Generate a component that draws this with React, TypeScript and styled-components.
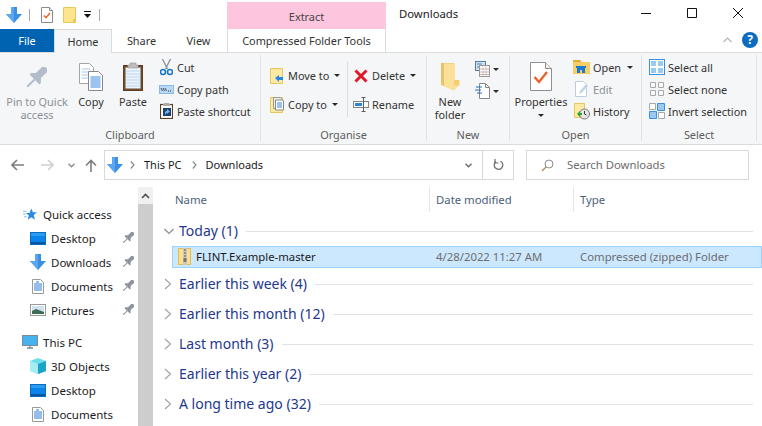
import React from "react";
import styled, { createGlobalStyle } from "styled-components";

const Global = createGlobalStyle`
  html, body { margin: 0; padding: 0; background: #fff; }
  body { font-family: "Noto Sans", "Open Sans", "Liberation Sans", sans-serif; font-size: 11.5px; color: #1a1a1a; }
`;

const Window = styled.div`
  width: 762px; height: 426px; overflow: hidden; background: #fff; display: flex; flex-direction: column;
`;
const TitleBar = styled.div`display: flex; height: 29px; align-items: stretch; flex: none; font-size: 10.9px;`;
const QuickBar = styled.div`display: flex; align-items: center; width: 227px; padding-left: 6px; box-sizing: border-box;`;
const QuickSep = styled.span<{ $left: number; $right: number }>`
  width: 1px; height: 12px; background: #a8a8a8; margin: 0 ${p => p.$right}px 0 ${p => p.$left}px; flex: none;
`;
const QuickGap = styled.span<{ $w: number }>`width: ${p => p.$w}px; flex: none;`;
const ExtractTab = styled.div`
  width: 159px; margin-top: 2px; background: #fec6de; color: #444; display: flex; align-items: center; justify-content: center; flex: none; padding-top: 2px; box-sizing: border-box;
`;
const WinTitle = styled.div`
  margin-left: 13px; flex: 1; font-size: 11.3px; color: #1a1a1a; line-height: 28px;
`;
const WinButtons = styled.div`display: flex; align-items: center; gap: 36px; padding-right: 19px; padding-bottom: 3px;`;

const TabRow = styled.div`display: flex; flex: none; position: relative; border-bottom: 1px solid #dadbdc; box-sizing: content-box; height: 23px; font-size: 10.9px;`;
const FileTab = styled.div`
  width: 54px; background: #0063b1; color: #fff; display: flex; align-items: center; justify-content: center; flex: none;
`;
const Tab = styled.div<{ $w: number; $active?: boolean }>`
  width: ${p => p.$w}px; flex: none; display: flex; align-items: center; justify-content: center; color: #333; box-sizing: border-box;
  ${p => p.$active ? `background:#f5f6f7;border:1px solid #dadbdc;border-bottom:none;height:24px;` : ``}
`;
const ToolsTab = styled.div`
  width: 159px; margin-left: 1px; border-left: 1px solid #dadbdc; border-right: 1px solid #dadbdc; box-sizing: border-box; display: flex; align-items: center; justify-content: center; color: #333; flex: none; height: 23px;
`;
const TabSpacer = styled.div`flex: 1;`;
const HelpArea = styled.div`display: flex; align-items: center; gap: 10px; padding-right: 4px; margin-top: -1px;`;
const HelpBadge = styled.div`
  width: 16px; height: 16px; border-radius: 50%; background: #0c6cc0; color: #fff; font-weight: 700; font-size: 12px; display: flex; align-items: center; justify-content: center; line-height: 1;
`;

const Ribbon = styled.div`
  display: flex; flex: none; background: #f5f6f7; border-bottom: 1px solid #dadbdc; box-sizing: content-box; padding-top: 1px; height: 90px; font-size: 10.9px;
`;
const Group = styled.div<{ $w: number }>`
  width: ${p => p.$w}px; flex: none; box-sizing: border-box; display: flex; flex-direction: column; position: relative;
  &::after { content: ""; position: absolute; right: 0; top: 1px; bottom: 3px; width: 1px; background: #e1e2e3; }
`;
const GroupBody = styled.div<{ $pl?: number }>`
  flex: 1; display: flex; align-items: flex-start; padding-left: ${p => p.$pl ?? 0}px; min-height: 0;
`;
const GroupLabel = styled.div`
  height: 18px; line-height: 18px; text-align: center; color: #5c5c5c; flex: none; padding-right: 1px;
`;
const Big = styled.div<{ $w: number; $muted?: boolean }>`
  width: ${p => p.$w}px; flex: none; display: flex; flex-direction: column; align-items: center; color: ${p => p.$muted ? "#8b9096" : "#333"}; text-align: center; line-height: 13px;
`;
const BigIcon = styled.div`height: 35px; margin-top: 5px; display: flex; align-items: center; justify-content: center; margin-bottom: 1px;`;
const SmallCol = styled.div<{ $ml?: number; $mt?: number; $w?: number }>`
  display: flex; flex-direction: column; margin-left: ${p => p.$ml ?? 0}px; margin-top: ${p => p.$mt ?? 2}px; ${p => p.$w ? `width:${p.$w}px;flex:none;` : ""}
`;
const Small = styled.div<{ $h?: number; $muted?: boolean; $gap?: number }>`
  height: ${p => p.$h ?? 22}px; display: flex; align-items: center; gap: ${p => p.$gap ?? 3}px; color: ${p => p.$muted ? "#8b9096" : "#333"}; white-space: nowrap;
`;
const IconSlot = styled.span<{ $w?: number }>`
  width: ${p => p.$w ?? 16}px; height: 18px; display: flex; align-items: center; justify-content: center; flex: none;
`;
const Caret = styled.span<{ $ml?: number; $mt?: number }>`
  width: 0; height: 0; border-left: 3px solid transparent; border-right: 3px solid transparent; border-top: 3px solid #2a2a2a; margin-left: ${p => p.$ml ?? 2}px; margin-top: ${p => p.$mt ?? 0}px; flex: none;
`;
const VSep = styled.span`width: 1px; height: 55px; background: #dcdddf; margin: 8px 5px 0 0; flex: none;`;
const NewCol = styled.div`display: flex; flex-direction: column; gap: 4px; margin-left: 3px; margin-top: 6px;`;
const NewRow = styled.div`display: flex; align-items: center; gap: 3px; height: 18px;`;

const NavRow = styled.div`display: flex; height: 30px; margin-top: 5px; flex: none; align-items: stretch;`;
const NavButtons = styled.div`display: flex; width: 104px; align-items: center; padding-left: 11px; box-sizing: border-box; flex: none;`;
const NavGap = styled.span<{ $w: number }>`width: ${p => p.$w}px; flex: none;`;
const AddressBox = styled.div`
  width: 410px; flex: none; border: 1px solid #d9d9d9; box-sizing: border-box; display: flex; align-items: center; padding-left: 2px; color: #1a1a1a; font-size: 11px;
`;
const Crumb = styled.span`white-space: nowrap; margin-top: -2px;`;
const CrumbArrow = styled.span<{ $ml: number; $mr: number }>`margin: 0 ${p => p.$mr}px 0 ${p => p.$ml}px; display: flex;`;
const AddrFill = styled.div`flex: 1;`;
const AddrDrop = styled.div`width: 28px; align-self: stretch; display: flex; align-items: center; justify-content: center; flex: none;`;
const AddrEnd = styled.div`width: 30px; align-self: stretch; border-left: 1px solid #d9d9d9; display: flex; align-items: center; justify-content: center; flex: none;`;
const SearchBox = styled.div`
  width: 223px; margin-left: 12px; border: 1px solid #d9d9d9; box-sizing: border-box; display: flex; align-items: center; padding-left: 14px; gap: 13px; color: #6d6d6d; flex: none; font-size: 11.3px;
`;
const SearchText = styled.span`margin-top: -2px;`;

const Main = styled.div`flex: 1; display: flex; min-height: 0; margin-top: 7px;`;
const Sidebar = styled.div`width: 153px; flex: none; display: flex; overflow: hidden;`;
const NavList = styled.div`width: 138px; flex: none; padding-top: 15px; box-sizing: border-box;`;
const NavItem = styled.div<{ $top?: boolean; $gapTop?: number }>`
  height: 24px; display: flex; align-items: center; padding-left: ${p => p.$top ? 22 : 30}px; gap: 5px; position: relative; margin-top: ${p => p.$gapTop ?? 0}px; white-space: nowrap; color: #1a1a1a;
`;
const NavIcon = styled.span`width: 16px; height: 16px; flex: none; display: flex; align-items: center; justify-content: center;`;
const PinSlot = styled.span`position: absolute; left: 123px; top: 6px; display: flex;`;
const Scrollbar = styled.div`width: 15px; flex: none; background: #f0f0f0; display: flex; flex-direction: column;`;
const ScrollBtn = styled.div`height: 17px; display: flex; align-items: center; justify-content: center; flex: none;`;
const ScrollThumb = styled.div`flex: 1; background: #cdcdcd;`;

const Content = styled.div`flex: 1; min-width: 0; display: flex; flex-direction: column; font-size: 11.35px;`;
const ColHeader = styled.div`display: grid; grid-template-columns: 276px 144px 1fr; height: 25px; margin-bottom: 4px; flex: none; color: #4c607a;`;
const ColCell = styled.div<{ $pl: number; $sep?: boolean }>`
  padding-left: ${p => p.$pl}px; display: flex; align-items: center; ${p => p.$sep ? "border-left:1px solid #e5e5e5;" : ""}
`;
const GroupHead = styled.div`
  height: 30px; display: flex; align-items: center; padding-right: 9px; flex: none;
`;
const Chevron = styled.span`width: 26px; flex: none; display: flex; padding-left: 11px; box-sizing: border-box;`;
const GroupTitle = styled.span`font-size: 14px; color: #22388f; white-space: nowrap; line-height: 20px;`;
const GroupLine = styled.span`flex: 1; height: 1px; background: #e2e2e2; margin-left: 8px; margin-top: 1px;`;
const FileRow = styled.div`
  margin-left: 19px; height: 22px; margin-bottom: 1px; padding-bottom: 1px; background: #cce8ff; border: 1px solid #99d1ff; box-sizing: border-box; display: grid; grid-template-columns: 256px 144px 1fr; align-items: center; flex: none;
`;
const FileName = styled.div`display: flex; align-items: center; gap: 5px; padding-left: 5px; color: #1a1a1a; white-space: nowrap;`;
const FileMeta = styled.div`padding-left: 7px; color: #6d6d6d; white-space: nowrap;`;

const Svg = styled.svg`display: block; flex: none;`;

const BlueDown = ({ s = 16 }: { s?: number }) => (
  <Svg width={s} height={s} viewBox="0 0 16 16"><path d="M5 0h6v7h5l-8 9-8-9h5z" fill="#3a8ee6" /><path d="M8 16 0 7h5V0h3z" fill="#5aa7ee" /></Svg>
);
const CheckDoc = () => (
  <Svg width={12} height={16} viewBox="0 0 12 16"><path d="M.5.5h8l3 3v12H.5z" fill="#fff" stroke="#8a8a8a" /><path d="M8.5.5v3h3" fill="#eee" stroke="#8a8a8a" /><path d="M3 8.5l2 2.2L9 6" fill="none" stroke="#e8622a" strokeWidth="1.5" /></Svg>
);
const BigCheckDoc = () => (
  <Svg width={22} height={29} viewBox="0 0 22 29"><path d="M.5.5h15l6 6v22H.5z" fill="#fff" stroke="#8f8f8f" /><path d="M15.5.5v6h6" fill="#eee" stroke="#8f8f8f" /><path d="M4.5 15l4.5 5 8-10" fill="none" stroke="#e9622b" strokeWidth="2.4" /></Svg>
);
const PlainFolder = () => (
  <Svg width={13} height={16} viewBox="0 0 13 16"><path d="M.5.5h12v15H.5z" fill="#fde58f" stroke="#e7c75a" /><path d="M10 12h2.5v3.5H10z" fill="#e7c75a" /></Svg>
);
const DropLine = () => (
  <Svg width={8} height={8} viewBox="0 0 8 8"><path d="M0 0h7v1H0zM0 3h7L3.5 7z" fill="#111" /></Svg>
);
const WinMin = () => <Svg width={10} height={10} viewBox="0 0 10 10"><path d="M0 5.5h10" stroke="#111" /></Svg>;
const WinMax = () => <Svg width={10} height={10} viewBox="0 0 10 10"><path d="M.5.5h9v9h-9z" fill="none" stroke="#111" /></Svg>;
const WinClose = () => <Svg width={10} height={10} viewBox="0 0 10 10"><path d="M0 0l10 10M10 0L0 10" stroke="#111" /></Svg>;
const ChevUp = () => <Svg width={9} height={6} viewBox="0 0 9 6"><path d="M.5 5L4.5 1l4 4" fill="none" stroke="#b5b5b5" strokeWidth="1.2" /></Svg>;

const PinShape = ({ s, c }: { s: number; c: string }) => (
  <Svg width={s} height={s} viewBox="0 0 20 20">
    <g transform="rotate(45 10 10)" fill={c}>
      <path d="M5 -3h10v3h-1.500v8l3.500 3.500v2H3v-2L6.500 8V0H5z" />
      <path d="M9 13.500h2V24h-2z" />
    </g>
  </Svg>
);
const CopyBig = () => (
  <Svg width={24} height={28} viewBox="0 0 24 28">
    <path d="M.5.5h10l4 4v16H.5z" fill="#fff" stroke="#a5a5a5" />
    <path d="M2.500 6h9M2.500 9h9M2.500 12h9M2.500 15h9" stroke="#a9c8ee" />
    <path d="M9.500 8.500h10l4 4v15h-14z" fill="#fff" stroke="#888" />
    <path d="M11.500 14h10M11.500 16h10M11.500 18h10M11.500 20h10M11.500 22h10M11.500 24h10" stroke="#3b86e0" />
  </Svg>
);
const PasteBig = () => (
  <Svg width={20} height={29} viewBox="0 0 20 29">
    <rect x=".5" y="3.500" width="19" height="25" fill="#6f4b2d" stroke="#5e3f26" />
    <rect x="2.500" y="5.500" width="15" height="21" fill="#eef4fb" />
    <path d="M3 9h14M3 12h14M3 15h14M3 18h14M3 21h14M3 24h14" stroke="#b9d6f2" />
    <path d="M7 3V1h6v2h2v3H5V3z" fill="#bdbdbd" stroke="#9a9a9a" strokeWidth=".6" />
  </Svg>
);
const Scissors = () => (
  <Svg width={13} height={17} viewBox="0 0 13 17"><path d="M2.500 0l5 10M10.500 0l-5 10" stroke="#8c96a3" strokeWidth="1.4" /><circle cx="3" cy="13" r="2.500" fill="none" stroke="#1a78d0" strokeWidth="1.6" /><circle cx="10" cy="13" r="2.500" fill="none" stroke="#1a78d0" strokeWidth="1.6" /></Svg>
);
const CopyPath = () => (
  <Svg width={15} height={9} viewBox="0 0 15 9"><rect x=".5" y=".5" width="14" height="8" fill="#b8d8f5" stroke="#8cbbe8" /><path d="M2 3l1.500 3M4 3l1.500 3M6 3l1.500 3" stroke="#333" strokeWidth=".8" /><path d="M9 6h1M11 6h1" stroke="#333" /></Svg>
);
const PasteShort = () => (
  <Svg width={13} height={16} viewBox="0 0 13 16"><rect x=".5" y="1.500" width="12" height="14" fill="#fff" stroke="#5e4026" strokeWidth="1.2" /><path d="M4 1V0h5v1h1v2H3V1z" fill="#aaa" /><rect x="3" y="5" width="8" height="8" fill="#1d3f6e" /><path d="M5 12V9l2-1.500V6l3 2.500L7 11V9.500z" fill="#6fb2ee" /></Svg>
);
const MoveTo = () => (
  <Svg width={14} height={16} viewBox="0 0 14 16"><path d="M.5.5h12v15H.5z" fill="#fde9a6" stroke="#e7c75a" /><path d="M5 10l4-3v2h4v3H9v2z" fill="#2a86e0" /></Svg>
);
const CopyTo = () => (
  <Svg width={14} height={16} viewBox="0 0 14 16"><path d="M.5.5h12v15H.5z" fill="#fde9a6" stroke="#e7c75a" /><path d="M3.500.5h7l2 2v9h-9z" fill="#eee" stroke="#999" /><path d="M5.500 3h7l1 1v9h-8z" fill="#fff" stroke="#888" /><path d="M7 6h5M7 8h5M7 10h5" stroke="#3b86e0" /></Svg>
);
const DeleteX = () => (
  <Svg width={14} height={14} viewBox="0 0 14 14"><path d="M1.500 1.500l11 11M12.500 1.500l-11 11" stroke="#e0192a" strokeWidth="3" /></Svg>
);
const Rename = () => (
  <Svg width={16} height={15} viewBox="0 0 16 15"><rect x=".5" y="4.500" width="15" height="6" fill="#fff" stroke="#7d8791" /><rect x="2" y="6" width="7" height="3" fill="#2a86e0" /><path d="M10.500 0v15M8.500.5h4M8.500 14.500h4" stroke="#5f5f5f" /></Svg>
);
const NewFolder = () => (
  <Svg width={19} height={28} viewBox="0 0 19 28"><path d="M0 0h13v27L0 22z" fill="#e8c468" /><path d="M3 .5h11v17h4v5l-5 5-10-4z" fill="#fbe097" /><path d="M13 17h5.500v5.500H13z" fill="#f4cf72" /></Svg>
);
const NewItem = () => (
  <Svg width={15} height={16} viewBox="0 0 15 16"><rect x=".5" y=".5" width="10" height="9" fill="#cfe3f6" stroke="#5a7a98" /><path d="M2 3h5M2 6h3" stroke="#5a7a98" /><rect x="4.500" y="4.500" width="10" height="11" fill="#fff" stroke="#999" /><path d="M5 8h9M5 11h9M5 13.500h9" stroke="#bbb" /><path d="M8 5v10M11 5v10" stroke="#e1a0a0" strokeWidth=".6" /></Svg>
);
const EasyAccess = () => (
  <Svg width={15} height={16} viewBox="0 0 15 16"><path d="M4.500.5h6l4 4v11h-10z" fill="#fff" stroke="#888" /><path d="M10.500.5v4h4" fill="none" stroke="#888" /><path d="M1 4h6M0 7h6M2 10h5" stroke="#1f6fc8" strokeWidth="1.2" /></Svg>
);
const OpenFolder = () => (
  <Svg width={17} height={14} viewBox="0 0 17 14"><path d="M0 0h7l2 2h8v12H0z" fill="#f8cd66" /><path d="M0 0h7l1 2H0z" fill="#e4a93b" /><path d="M4 13V8h8v5h-3v-3H7v3z" fill="#1b7ad6" /><path d="M3 6h10v2H3z" fill="#1b7ad6" /></Svg>
);
const EditDoc = () => (
  <Svg width={14} height={16} viewBox="0 0 14 16"><path d="M.5.5h8l3 3v12H.5z" fill="#fff" stroke="#c3cbd8" /><path d="M4 13l1-3 6-7 2 1.500-6 7z" fill="#c0d3ea" /></Svg>
);
const History = () => (
  <Svg width={16} height={18} viewBox="0 0 16 18"><path d="M.5 1.500h10v14H.5z" fill="#fde9a6" stroke="#e7c75a" /><circle cx="10.500" cy="12" r="5" fill="#e6e6e6" stroke="#777" /><path d="M10.500 9v3l2 1" fill="none" stroke="#333" /><path d="M3 12l3-3v2h2v2H6v2z" fill="#2aa32a" /></Svg>
);
const SelAll = () => (
  <Svg width={16} height={16} viewBox="0 0 16 16"><rect x=".5" y=".5" width="15" height="15" fill="#fff" stroke="#3b8ee0" /><path d="M2 2h5v5H2zM9 2h5v5H9zM2 9h5v5H2zM9 9h5v5H9z" fill="#9cc9f2" /></Svg>
);
const SelNone = () => (
  <Svg width={14} height={14} viewBox="0 0 14 14"><path d="M.5.5h5v5h-5zM8.500.5h5v5h-5zM.5 8.500h5v5h-5zM8.500 8.500h5v5h-5z" fill="#fff" stroke="#a9a9a9" /></Svg>
);
const SelInv = () => (
  <Svg width={16} height={16} viewBox="0 0 16 16"><path d="M.5.5h6v6h-6zM9.500 9.500h6v6h-6z" fill="#fff" stroke="#a9a9a9" /><path d="M8.500.5h7v7h-7zM.5 8.500h7v7h-7z" fill="#9cc9f2" stroke="#3b8ee0" /></Svg>
);
const ArrowBack = ({ c }: { c: string }) => <Svg width={13} height={12} viewBox="0 0 13 12"><path d="M6 1L1 6l5 5M1 6h12" fill="none" stroke={c} strokeWidth="1.6" /></Svg>;
const ArrowFwd = ({ c }: { c: string }) => <Svg width={13} height={12} viewBox="0 0 13 12"><path d="M7 1l5 5-5 5M12 6H0" fill="none" stroke={c} strokeWidth="1.6" /></Svg>;
const ArrowUp = () => <Svg width={12} height={13} viewBox="0 0 12 13"><path d="M1 6.500l5-5 5 5M6 1.500V13" fill="none" stroke="#7d7d7d" strokeWidth="1.6" /></Svg>;
const SmallChevDown = ({ c = "#8a8a8a" }: { c?: string }) => <Svg width={7} height={5} viewBox="0 0 7 5"><path d="M.5 .8L3.500 3.800 6.500 .8" fill="none" stroke={c} strokeWidth="1.3" /></Svg>;
const CrumbChev = () => <Svg width={5} height={8} viewBox="0 0 5 8"><path d="M.8 .5L4 4 .8 7.500" fill="none" stroke="#8a8a8a" strokeWidth="1.2" /></Svg>;
const Refresh = () => <Svg width={11} height={12} viewBox="0 0 11 12"><path d="M7.500 2.200A4.300 4.300 0 1 1 3 2.500" fill="none" stroke="#6e6e6e" strokeWidth="1.3" /><path d="M2 0v4h3.500" fill="none" stroke="#6e6e6e" strokeWidth="1.2" /></Svg>;
const SearchIcon = () => <Svg width={13} height={13} viewBox="0 0 13 13"><circle cx="8" cy="5" r="4" fill="none" stroke="#8c8c8c" /><path d="M5 8l-4 4" stroke="#b88a5a" strokeWidth="1.2" /></Svg>;
const StarQuick = () => (
  <Svg width={14} height={13} viewBox="0 0 15 13"><path d="M9 0l1.500 4H15l-3.500 3 1.300 5L9 9.500 5 12l1.300-4.500L3 5h4z" fill="#2b8ae6" /><path d="M0 3h4M0 6h3M1 9h3" stroke="#7ab8f0" /></Svg>
);
const Desktop = () => (
  <Svg width={16} height={13} viewBox="0 0 16 13"><rect x=".5" y=".5" width="15" height="12" fill="#0a84e8" stroke="#0a6cc0" /><path d="M1 10h14v2H1z" fill="#0a55a0" /><path d="M1 1h14v3H1z" fill="#2b9bf0" /></Svg>
);
const Docs = () => (
  <Svg width={12} height={15} viewBox="0 0 12 15"><path d="M.5.5h8l3 3v11H.5z" fill="#fff" stroke="#999" /><path d="M2 5h8M2 7h8M2 9h8M2 11h8M4 3h3" stroke="#2b7cd3" /></Svg>
);
const Picture = () => (
  <Svg width={16} height={12} viewBox="0 0 16 12"><rect x=".5" y=".5" width="15" height="11" fill="#fff" stroke="#999" /><rect x="2" y="2" width="12" height="8" fill="#cfe3ee" /><path d="M2 7l4-2 8 3v2H2z" fill="#3d6b53" /></Svg>
);
const Monitor = () => (
  <Svg width={16} height={15} viewBox="0 0 16 15"><rect x=".5" y=".5" width="15" height="10" fill="#46b3ee" stroke="#7a8b99" /><path d="M5 13h6M8 11v2" stroke="#7a8b99" strokeWidth="1.3" /></Svg>
);
const Cube = () => (
  <Svg width={16} height={16} viewBox="0 0 16 16"><path d="M8 0l8 3v10l-8 3-8-3V3z" fill="#6be0ea" /><path d="M8 6l8-3v10l-8 3z" fill="#1aa5c8" /><path d="M0 3l8 3v10l-8-3z" fill="#a6eef2" /></Svg>
);
const Zip = () => (
  <Svg width={13} height={17} viewBox="0 0 13 17"><path d="M.5.5h12v16H.5z" fill="#fde08a" stroke="#e0bc55" /><rect x="5" y="0" width="4" height="17" fill="#c9c9c9" /><path d="M6 2h2M6 5h2M6 8h2" stroke="#555" /><rect x="5.500" y="10" width="3" height="4" fill="#777" /></Svg>
);
const ChevRight = () => <Svg width={8} height={12} viewBox="0 0 8 12"><path d="M1 1l5.500 5L1 11" fill="none" stroke="#a0a0a0" strokeWidth="1.1" /></Svg>;
const ChevDown = () => <Svg width={10} height={7} viewBox="0 0 10 7"><path d="M.5 1L5 5.500 9.500 1" fill="none" stroke="#8a8a8a" strokeWidth="1.1" /></Svg>;
const ScrollUp = () => <Svg width={9} height={6} viewBox="0 0 9 6"><path d="M1 5l3.500-3.500L8 5" fill="none" stroke="#505050" strokeWidth="1.6" /></Svg>;

const groups = ["Earlier this week (4)", "Earlier this month (12)", "Last month (3)", "Earlier this year (2)", "A long time ago (32)"];

const Pinned = () => <PinSlot><PinShape s={11} c="#8d95a0" /></PinSlot>;

export default function App() {
  return (
    <Window>
      <Global />
      <TitleBar>
        <QuickBar>
          <BlueDown />
          <QuickSep $left={7} $right={11} />
          <CheckDoc />
          <QuickGap $w={10} />
          <PlainFolder />
          <QuickGap $w={8} />
          <DropLine />
          <QuickSep $left={7} $right={0} />
        </QuickBar>
        <ExtractTab>Extract</ExtractTab>
        <WinTitle>Downloads</WinTitle>
        <WinButtons><WinMin /><WinMax /><WinClose /></WinButtons>
      </TitleBar>
      <TabRow>
        <FileTab>File</FileTab>
        <Tab $w={58} $active>Home</Tab>
        <Tab $w={59}>Share</Tab>
        <Tab $w={55}>View</Tab>
        <ToolsTab>Compressed Folder Tools</ToolsTab>
        <TabSpacer />
        <HelpArea><ChevUp /><HelpBadge>?</HelpBadge></HelpArea>
      </TabRow>
      <Ribbon>
        <Group $w={261}>
          <GroupBody $pl={4}>
            <Big $w={66} $muted><BigIcon><PinShape s={20} c="#b2bccb" /></BigIcon>Pin to Quick<br />access</Big>
            <Big $w={42}><BigIcon><CopyBig /></BigIcon>Copy</Big>
            <Big $w={42}><BigIcon><PasteBig /></BigIcon>Paste</Big>
            <SmallCol $ml={4}>
              <Small><IconSlot><Scissors /></IconSlot>Cut</Small>
              <Small><IconSlot><CopyPath /></IconSlot>Copy path</Small>
              <Small><IconSlot><PasteShort /></IconSlot>Paste shortcut</Small>
            </SmallCol>
          </GroupBody>
          <GroupLabel>Clipboard</GroupLabel>
        </Group>
        <Group $w={166}>
          <GroupBody $pl={8}>
            <SmallCol $mt={7} $w={78}>
              <Small $h={29}><IconSlot><MoveTo /></IconSlot>Move to<Caret /></Small>
              <Small $h={29}><IconSlot><CopyTo /></IconSlot>Copy to<Caret /></Small>
            </SmallCol>
            <VSep />
            <SmallCol $mt={7}>
              <Small $h={29}><IconSlot><DeleteX /></IconSlot>Delete<Caret /></Small>
              <Small $h={29}><IconSlot><Rename /></IconSlot>Rename</Small>
            </SmallCol>
          </GroupBody>
          <GroupLabel>Organise</GroupLabel>
        </Group>
        <Group $w={83}>
          <GroupBody $pl={1}>
            <Big $w={44}><BigIcon><NewFolder /></BigIcon>New<br />folder</Big>
            <NewCol>
              <NewRow><NewItem /><Caret $ml={0} /></NewRow>
              <NewRow><EasyAccess /><Caret $ml={0} /></NewRow>
            </NewCol>
          </GroupBody>
          <GroupLabel>New</GroupLabel>
        </Group>
        <Group $w={132}>
          <GroupBody $pl={1}>
            <Big $w={60}><BigIcon><BigCheckDoc /></BigIcon>Properties<Caret $ml={0} $mt={6} /></Big>
            <SmallCol $ml={2}>
              <Small><IconSlot $w={17}><OpenFolder /></IconSlot>Open<Caret $ml={3} /></Small>
              <Small $muted><IconSlot $w={17}><EditDoc /></IconSlot>Edit</Small>
              <Small><IconSlot $w={17}><History /></IconSlot>History</Small>
            </SmallCol>
          </GroupBody>
          <GroupLabel>Open</GroupLabel>
        </Group>
        <Group $w={115}>
          <GroupBody $pl={7}>
            <SmallCol>
              <Small><IconSlot><SelAll /></IconSlot>Select all</Small>
              <Small><IconSlot><SelNone /></IconSlot>Select none</Small>
              <Small><IconSlot><SelInv /></IconSlot>Invert selection</Small>
            </SmallCol>
          </GroupBody>
          <GroupLabel>Select</GroupLabel>
        </Group>
      </Ribbon>
      <NavRow>
        <NavButtons>
          <ArrowBack c="#7d7d7d" />
          <NavGap $w={17} />
          <ArrowFwd c="#d0d0d0" />
          <NavGap $w={14} />
          <SmallChevDown />
          <NavGap $w={10} />
          <ArrowUp />
        </NavButtons>
        <AddressBox>
          <BlueDown />
          <CrumbArrow $ml={7} $mr={9}><CrumbChev /></CrumbArrow>
          <Crumb>This PC</Crumb>
          <CrumbArrow $ml={10} $mr={9}><CrumbChev /></CrumbArrow>
          <Crumb>Downloads</Crumb>
          <AddrFill />
          <AddrDrop><SmallChevDown c="#666" /></AddrDrop>
          <AddrEnd><Refresh /></AddrEnd>
        </AddressBox>
        <SearchBox><SearchIcon /><SearchText>Search Downloads</SearchText></SearchBox>
      </NavRow>
      <Main>
        <Sidebar>
          <NavList>
            <NavItem $top><NavIcon><StarQuick /></NavIcon>Quick access</NavItem>
            <NavItem><NavIcon><Desktop /></NavIcon>Desktop<Pinned /></NavItem>
            <NavItem><NavIcon><BlueDown /></NavIcon>Downloads<Pinned /></NavItem>
            <NavItem><NavIcon><Docs /></NavIcon>Documents<Pinned /></NavItem>
            <NavItem><NavIcon><Picture /></NavIcon>Pictures<Pinned /></NavItem>
            <NavItem $top $gapTop={8}><NavIcon><Monitor /></NavIcon>This PC</NavItem>
            <NavItem><NavIcon><Cube /></NavIcon>3D Objects</NavItem>
            <NavItem><NavIcon><Desktop /></NavIcon>Desktop</NavItem>
            <NavItem><NavIcon><Docs /></NavIcon>Documents</NavItem>
          </NavList>
          <Scrollbar>
            <ScrollBtn><ScrollUp /></ScrollBtn>
            <ScrollThumb />
          </Scrollbar>
        </Sidebar>
        <Content>
          <ColHeader>
            <ColCell $pl={22}>Name</ColCell>
            <ColCell $pl={6} $sep>Date modified</ColCell>
            <ColCell $pl={6} $sep>Type</ColCell>
          </ColHeader>
          <GroupHead>
            <Chevron><ChevDown /></Chevron>
            <GroupTitle>Today (1)</GroupTitle>
            <GroupLine />
          </GroupHead>
          <FileRow>
            <FileName><Zip />FLINT.Example-master</FileName>
            <FileMeta>4/28/2022 11:27 AM</FileMeta>
            <FileMeta>Compressed (zipped) Folder</FileMeta>
          </FileRow>
          {groups.map(g => (
            <GroupHead key={g}>
              <Chevron><ChevRight /></Chevron>
              <GroupTitle>{g}</GroupTitle>
              <GroupLine />
            </GroupHead>
          ))}
        </Content>
      </Main>
    </Window>
  );
}
